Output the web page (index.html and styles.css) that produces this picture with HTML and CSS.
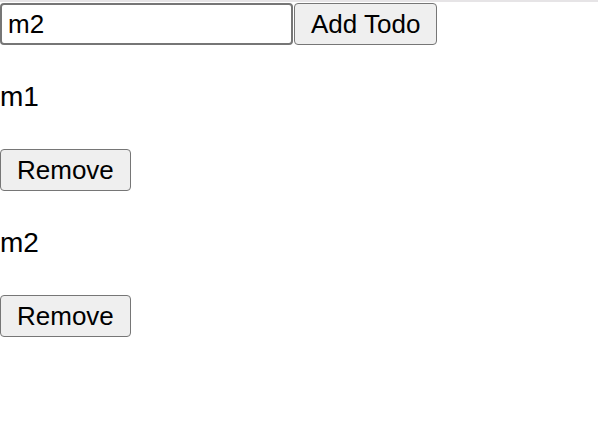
FILE: index.html
```html
<!DOCTYPE html>
<html>
<head>
<meta charset="utf-8">
<link rel="stylesheet" href="styles.css">
</head>
<body>
<div class="app">
  <div class="add-row">
    <input class="todo-input" type="text" value="m2">
    <button class="btn">Add Todo</button>
  </div>
  <div class="item">
    <p class="item-text">m1</p>
    <button class="btn">Remove</button>
  </div>
  <div class="item">
    <p class="item-text">m2</p>
    <button class="btn">Remove</button>
  </div>
</div>
</body>
</html>
```
FILE: styles.css
```css
html, body {
  margin: 0;
  padding: 0;
  background: #fff;
}
body {
  font-family: "Liberation Sans", Arial, sans-serif;
  border-top: 2px solid #e6e4e6;
}
.app {
  padding-top: 1px;
}
.add-row {
  display: flex;
  align-items: flex-start;
  gap: 1px;
}
.todo-input {
  box-sizing: border-box;
  width: 293px;
  height: 42px;
  margin: 0;
  padding: 0 6px;
  border: 2px solid #767676;
  border-radius: 4px;
  font-family: "Liberation Sans", Arial, sans-serif;
  font-size: 26px;
  color: #000;
  background: #fff;
  outline: none;
}
.btn {
  box-sizing: border-box;
  height: 42px;
  margin: 0;
  padding: 0 16px;
  border: 1px solid #767676;
  border-radius: 4px;
  background: #efefef;
  font-family: "Liberation Sans", Arial, sans-serif;
  font-size: 26px;
  color: #000;
  display: block;
}
.item-text {
  margin: 36px 0;
  font-size: 28px;
  line-height: 32px;
}
```
